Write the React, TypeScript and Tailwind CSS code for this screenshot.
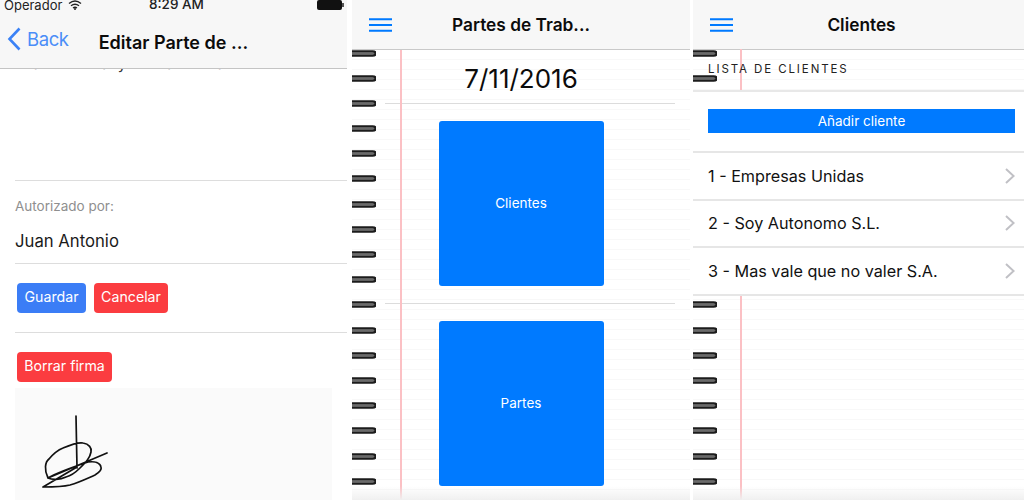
import React from "react";

const RING_COUNT = Array.from({ length: 18 }, (_, i) => i);

function Rings() {
  return (
    <div className="absolute left-0 top-[49.5px] flex w-[24px] flex-col gap-[18.2px]">
      {RING_COUNT.map((i) => (
        <svg key={i} width="24" height="7" viewBox="0 0 24 7" className="block shrink-0">
          <path d="M0 3.5H22" stroke="#6a6a6a" strokeWidth="2.2" />
          <path d="M0 1.4H20.5Q23.5 1.4 23.5 3.5Q23.5 5.6 20.5 5.6H0" fill="none" stroke="#1c1c1c" strokeWidth="2.4" />
        </svg>
      ))}
    </div>
  );
}

function Burger() {
  return (
    <svg width="23" height="14" viewBox="0 0 23 14" className="block">
      <path d="M0 1.2H23M0 7H23M0 12.8H23" stroke="#007aff" strokeWidth="2" />
    </svg>
  );
}

function Chevron() {
  return (
    <svg width="10" height="16" viewBox="0 0 10 16" className="block">
      <path d="M1 1L8.6 8L1 15" fill="none" stroke="#c0c0c5" strokeWidth="2" />
    </svg>
  );
}

const paper =
  "bg-[repeating-linear-gradient(to_bottom,#ffffff_0px,#ffffff_9px,#f8f8f8_9px,#f8f8f8_10px)]";

function NavBar({ title, className }: { title: string; className: string }) {
  return (
    <div className={`flex h-[50px] shrink-0 items-center border-b border-[#c9c9c9] bg-[#f7f7f7] ${className}`}>
      <div className="ml-[17px] w-[23px] shrink-0">
        <Burger />
      </div>
      <div className="flex-1 text-center text-[17.3px] font-semibold leading-none text-[#0b0b0b]">{title}</div>
      <div className="w-[40px] shrink-0" />
    </div>
  );
}

function Row({ text }: { text: string }) {
  return (
    <div className="flex h-[47.5px] items-center justify-between border-b-2 border-[#e6e6e6] bg-white pl-[15px] pr-[9px]">
      <span className="text-[16.2px] leading-none text-[#111]">{text}</span>
      <Chevron />
    </div>
  );
}

function Btn({ label, className }: { label: string; className: string }) {
  return (
    <div className={`flex h-[30px] shrink-0 items-center justify-center rounded-[4px] text-[14.2px] leading-none text-white ${className}`}>
      {label}
    </div>
  );
}

export default function App() {
  return (
    <div className="flex h-[500px] w-[1024px] overflow-hidden bg-white font-['Inter','Liberation_Sans',sans-serif]">
      {/* Left phone */}
      <div className="flex h-full w-[347px] shrink-0 flex-col">
        <div className="h-[69px] shrink-0 border-b border-[#c4c4c4] bg-[#f7f7f7]">
          <div className="relative -mt-[5px] flex h-[18px] items-center justify-between pl-[4px] pr-[3px] pt-[2px]">
            <div className="flex items-center gap-[6px] text-[13px] leading-none text-[#222]">
              Operador
              <svg width="14" height="10" viewBox="0 0 14 10">
                <path d="M1 3.5Q7 -1.5 13 3.5M3 5.8Q7 2.6 11 5.8M5 8Q7 6.6 9 8" fill="none" stroke="#222" strokeWidth="1.4" />
                <circle cx="7" cy="9" r="1" fill="#222" />
              </svg>
            </div>
            <div className="absolute left-[149px] top-[3px] text-[13.5px] font-medium leading-none text-[#222]">8:29 AM</div>
            <div className="flex items-center">
              <div className="h-[10px] w-[25px] rounded-[2px] bg-[#111]" />
              <div className="h-[4px] w-[2px] bg-[#555]" />
            </div>
          </div>
          <div className="mt-[10px] flex h-[32px] items-center">
            <svg width="14" height="24" viewBox="0 0 14 24" className="ml-[7px] shrink-0">
              <path d="M12.5 1.5L2.5 12L12.5 22.5" fill="none" stroke="#3b82f6" strokeWidth="2.6" />
            </svg>
            <span className="ml-[6px] mt-[1px] text-[18.5px] leading-none tracking-[-0.4px] text-[#4a8df8]">Back</span>
            <span className="ml-[30px] mt-[8px] text-[18px] font-semibold leading-none text-[#0b0b0b]">Editar Parte de ...</span>
          </div>
        </div>
        <div className="flex min-h-0 flex-1 flex-col overflow-hidden pl-[15px]">
          <div className="h-[112px] shrink-0 border-b border-[#dddddd]">
            <div className="-mt-[15px] pl-[6px] text-[15.5px] leading-[20px] text-[#333]">Cambio total y revisado final</div>
          </div>
          <div className="mt-[18px] shrink-0 text-[13.5px] leading-[14px] text-[#8f8f8f]">Autorizado por:</div>
          <div className="mt-[20px] shrink-0 text-[16.7px] leading-[17.5px] text-[#1a1a1a]">Juan Antonio</div>
          <div className="mt-[12px] h-px shrink-0 bg-[#dddddd]" />
          <div className="mt-[19px] flex shrink-0 gap-[8px] pl-[2px]">
            <Btn label="Guardar" className="w-[69px] bg-[#3b7df6]" />
            <Btn label="Cancelar" className="w-[74px] bg-[#fb3c40]" />
          </div>
          <div className="mt-[19px] h-px shrink-0 bg-[#dddddd]" />
          <div className="mt-[19px] shrink-0 pl-[2px]">
            <Btn label="Borrar firma" className="w-[95px] bg-[#fb3c40]" />
          </div>
          <div className="mt-[6px] h-[112px] w-[317px] shrink-0 bg-[#fafafa] pl-[25px] pt-[24px]">
            <svg width="72" height="80" viewBox="0 0 72 80" className="block">
              <path
                d="M36 4L37 56M8 66C4 58 5 50 9 47C14 41 18 38 23 36C30 33 38 30 43 31C49 32 52 36 51 40C50 46 46 50 40 56C36 60 30 64 26 65C20 68 12 68 8 66ZM3 75C14 75 22 75 30 73C40 70 48 66 55 63C60 60 62 58 61 55C60 51 55 49 48 50C36 54 18 60 8 66M8 66L67 41M3 75L37 55"
                fill="none"
                stroke="#111"
                strokeWidth="1.7"
                strokeLinecap="round"
                strokeLinejoin="round"
              />
            </svg>
          </div>
        </div>
      </div>

      <div className="w-[5px] shrink-0" />

      {/* Middle phone */}
      <div className="relative flex h-full w-[338px] shrink-0 flex-col overflow-hidden">
        <NavBar title="Partes de Trab..." className="" />
        <div className={`flex min-h-0 flex-1 flex-col ${paper}`}>
          <div className="flex h-[53px] shrink-0 items-center justify-center pt-[4px] text-[26px] leading-none text-[#0b0b0b]">
            7/11/2016
          </div>
          <div className="ml-[33px] mr-[15px] h-px shrink-0 bg-[#dcdcdc]" />
          <div className="mt-[17px] flex h-[165px] w-[165px] shrink-0 items-center justify-center self-center rounded-[3px] bg-[#007aff] text-[13.5px] text-white">
            Clientes
          </div>
          <div className="mt-[17px] ml-[33px] mr-[15px] h-px shrink-0 bg-[#dcdcdc]" />
          <div className="mt-[17px] flex h-[165px] w-[165px] shrink-0 items-center justify-center self-center rounded-[3px] bg-[#007aff] text-[13.5px] text-white">
            Partes
          </div>
        </div>
        <div className="absolute bottom-0 left-[48px] top-[50px] w-[2px] bg-[#fbc0c4]" />
        <Rings />
        <div className="absolute bottom-0 left-0 right-0 h-[14px] bg-gradient-to-b from-transparent to-[#f0f0f0]" />
      </div>

      <div className="w-[3px] shrink-0" />

      {/* Right phone */}
      <div className="relative flex h-full w-[331px] shrink-0 flex-col overflow-hidden">
        <NavBar title="Clientes" className="h-[49px] [&>div:nth-child(2)]:pl-[6px]" />
        <div className={`flex min-h-0 flex-1 flex-col ${paper}`}>
          <div className="relative z-10 flex h-[42px] shrink-0 items-center border-b-2 border-[#e8e8e8] pl-[15px] text-[11.5px] tracking-[1.9px] text-[#222]">
            LISTA DE CLIENTES
          </div>
          <div className="relative z-10 flex shrink-0 flex-col bg-white pb-[19px] pt-[17px]">
            <div className="ml-[15px] mr-[9px] flex h-[24px] items-center justify-center bg-[#007aff] pt-[1px] text-[13.5px] leading-none text-white">
              Añadir cliente
            </div>
          </div>
          <div className="relative z-10 -mt-px shrink-0 border-t-2 border-[#e6e6e6]">
            <Row text="1 - Empresas Unidas" />
            <Row text="2 - Soy Autonomo S.L." />
            <Row text="3 - Mas vale que no valer S.A." />
          </div>
        </div>
        <div className="absolute bottom-0 left-[47px] top-[49px] w-[2px] bg-[#fbc0c4]" />
        <Rings />
        <div className="absolute bottom-0 left-0 right-0 h-[14px] bg-gradient-to-b from-transparent to-[#f0f0f0]" />
      </div>
    </div>
  );
}
